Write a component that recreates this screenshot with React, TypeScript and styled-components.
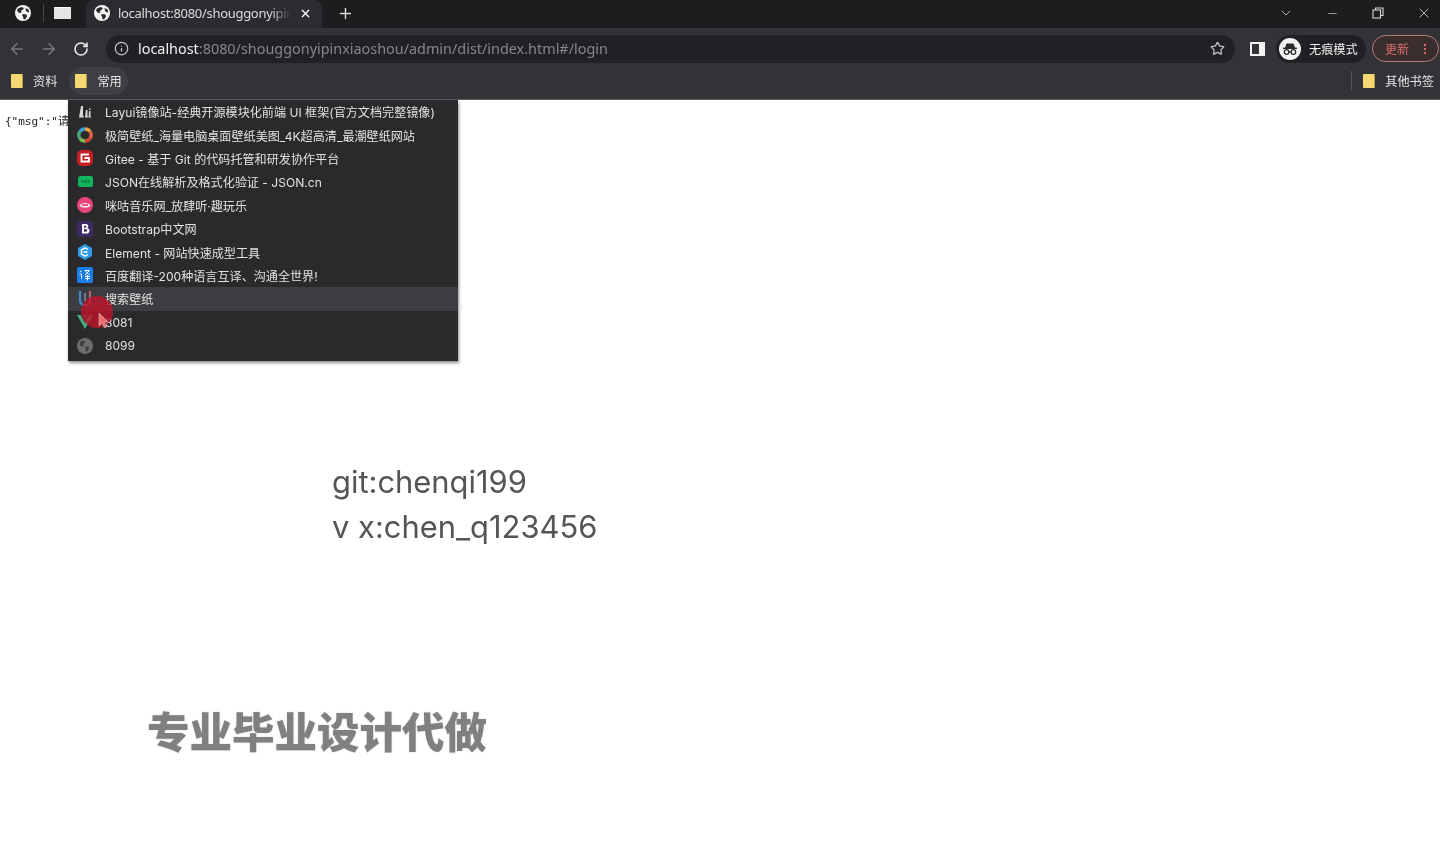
import React from 'react';
import styled, { createGlobalStyle } from 'styled-components';
import { ArrowLeft, ArrowRight, ChevronDown, Info, Minus, MoreVertical, Plus, RotateCw, Star, X } from 'lucide-react';

const GlobalStyle = createGlobalStyle`
  html, body {
    margin: 0;
    height: 100%;
    background: #fff;
    overflow: hidden;
  }
`;

const Page = styled.div`
  position: relative;
  width: 1440px;
  height: 864px;
  overflow: hidden;
  display: flex;
  flex-direction: column;
  font-family: "Noto Sans", "Noto Sans CJK SC", sans-serif;
  filter: blur(0.4px);
`;

const TabStrip = styled.div`
  height: 28px;
  box-sizing: border-box;
  padding: 0 0 2px 15px;
  background: #1b1d1f;
  display: flex;
  align-items: center;
  color: #fff;
`;

const PinnedGlobe = styled.div`
  width: 16px;
  height: 16px;
  display: flex;
`;

const StripDivider = styled.div`
  width: 1px;
  height: 18px;
  background: #45474a;
  margin: 0 10px 0 12px;
`;

const TabThumb = styled.div`
  width: 17px;
  height: 12px;
  background: #e6e6e6;
  border-top: 1px solid #fff;
  box-sizing: border-box;
`;

const ActiveTab = styled.div`
  width: 236px;
  height: 28px;
  margin: 0 0 -2px 15px;
  padding: 0 10px 2px 8px;
  box-sizing: border-box;
  background: #2a2c2f;
  border-radius: 8px 8px 0 0;
  display: flex;
  align-items: center;
  gap: 8px;
`;

const TabTitle = styled.span`
  flex: 1;
  font-size: 13px;
  letter-spacing: -0.3px;
  color: #dcdcdc;
  white-space: nowrap;
  overflow: hidden;
  -webkit-mask-image: linear-gradient(90deg, #000 88%, transparent);
  mask-image: linear-gradient(90deg, #000 88%, transparent);
`;

const NewTab = styled.div`
  margin-left: 15px;
  display: flex;
  color: #e0e0e0;
`;

const WindowControls = styled.div`
  margin: 0 -7px 0 auto;
  display: flex;
  align-items: center;
  color: #d8d8d8;
`;

const WindowButton = styled.div`
  width: 46px;
  display: flex;
  justify-content: center;
`;

const Toolbar = styled.div`
  height: 38px;
  box-sizing: border-box;
  padding: 3px 0 0 1px;
  background: #323336;
  display: flex;
  align-items: center;
`;

const NavButton = styled.div<{ $muted?: boolean }>`
  width: 32px;
  display: flex;
  justify-content: center;
  color: ${p => (p.$muted ? '#77797c' : '#e8e8e8')};
`;

const Omnibox = styled.div`
  width: 1129px;
  height: 28px;
  margin-left: 9px;
  padding: 0 10px 0 8px;
  box-sizing: border-box;
  background: #202124;
  border-radius: 14px;
  display: flex;
  align-items: center;
  color: #c6c6c6;
`;

const Url = styled.div`
  margin-left: 9px;
  font-size: 14.4px;
  color: #85878a;
  white-space: nowrap;
  flex: 1;
`;

const UrlHost = styled.span`
  color: #f0f0f0;
`;

const SideButton = styled.div`
  width: 15px;
  height: 14px;
  margin-left: 15px;
  box-sizing: border-box;
  border: 2px solid #f4f4f4;
  border-right-width: 6px;
  flex: none;
`;

const IncognitoChip = styled.div`
  width: 90px;
  height: 28px;
  margin-left: 11px;
  padding-left: 3px;
  box-sizing: border-box;
  display: flex;
  align-items: center;
  gap: 8px;
  background: #1f2023;
  border-radius: 14px;
  font-size: 12.2px;
  color: #f0f0f0;
  white-space: nowrap;
  flex: none;
`;

const IncognitoBadge = styled.div`
  width: 22px;
  height: 22px;
  border-radius: 50%;
  background: #f2f2f2;
  display: flex;
  align-items: center;
  justify-content: center;
`;

const UpdateChip = styled.div`
  width: 67px;
  height: 27px;
  margin-left: 6px;
  padding-left: 12px;
  box-sizing: border-box;
  display: flex;
  align-items: center;
  gap: 9px;
  border: 1px solid #b57c78;
  border-radius: 14px;
  background: #3a2d2e;
  color: #d5706a;
  font-size: 12px;
  flex: none;
`;

const UpdateDots = styled.div`
  display: flex;
`;

const BookmarkBar = styled.div`
  height: 34px;
  background: #323336;
  border-bottom: 1px solid #5a5b5d;
  box-sizing: border-box;
  display: flex;
  align-items: center;
  padding: 0 0 3px 5px;
  font-size: 12.2px;
  color: #e4e4e4;
`;

const BookmarkItem = styled.div<{ $open?: boolean }>`
  height: 28px;
  padding: 0 6px;
  margin-right: 6px;
  display: flex;
  align-items: center;
  gap: 10px;
  border-radius: 14px;
  background: ${p => (p.$open ? '#3e3f42' : 'transparent')};

  &:last-child {
    margin-right: 0;
  }
`;

const Folder = styled.div`
  width: 12px;
  height: 14px;
  background: #f7d774;
  border-right: 1px solid #b39a4c;
  box-sizing: border-box;
  border-radius: 1px;
`;

const BarDivider = styled.div`
  width: 1px;
  height: 20px;
  background: #55565a;
  margin-left: auto;
  margin-right: 5px;
`;

const Content = styled.main`
  flex: 1;
  background: #fff;
  overflow: hidden;
`;

const JsonLine = styled.pre`
  margin: 14px 0 0 5px;
  height: 16px;
  font: 11px/16px "DejaVu Sans Mono", "Noto Sans CJK SC", monospace;
  color: #222;
`;

const Contact = styled.div`
  margin: 329px 0 0 332px;
  font-family: Inter, "Liberation Sans", sans-serif;
  font-size: 30.9px;
  line-height: 45px;
  color: #555;
`;

const Slogan = styled.div`
  margin: 151px 0 0 147px;
  font-family: "Noto Sans CJK SC", sans-serif;
  font-weight: 900;
  font-size: 42.5px;
  line-height: 60px;
  color: #808080;
  text-shadow: 0 0 2px #d4d4d4;
`;

const Menu = styled.div`
  position: absolute;
  left: 68px;
  top: 100px;
  width: 390px;
  height: 261px;
  box-sizing: border-box;
  background: #2a2a2d;
  box-shadow: 1px 2px 3px rgba(0, 0, 0, 0.45);
`;

const MenuRow = styled.div<{ $hover?: boolean }>`
  height: 23.4px;
  padding-left: 8px;
  display: flex;
  align-items: center;
  gap: 11px;
  font-family: Inter, "Noto Sans CJK SC", sans-serif;
  font-size: 12.1px;
  white-space: nowrap;
  color: #e2e2e2;
  background: ${p => (p.$hover ? '#3c3d40' : 'transparent')};
`;

const MenuIcon = styled.div`
  width: 18px;
  height: 18px;
  flex: none;
  display: flex;
  align-items: center;
  justify-content: center;
`;

const CursorSpot = styled.div`
  position: absolute;
  left: 81px;
  top: 296px;
  width: 32px;
  height: 32px;
  border-radius: 50%;
  background: rgba(190, 20, 40, 0.8);
`;

const CursorArrow = styled.svg`
  position: absolute;
  left: 98px;
  top: 312px;
`;

const Globe = ({ size = 16 }: { size?: number }) => (
  <svg width={size} height={size} viewBox="0 0 16 16">
    <circle cx="8" cy="8" r="8" fill="#f4f4f4" />
    <path d="M3 3.5 6.5 2 9 3 7.5 5 6 5.5 6.5 7.5 4 8 2 5.5zM8 9l3.5.5.5 2L10 14.5 8.5 14 8 11.5 7 10zM10.5 3l3 1.5.8 3-2-.5L11 6z" fill="#26282b" />
  </svg>
);

const IncognitoIcon = () => (
  <svg width="18" height="18" viewBox="0 0 18 18" fill="none" stroke="#2a2a2a">
    <path d="M5.5 3.5h7L14 8H4z" fill="#2a2a2a" stroke="none" />
    <path d="M2 8.3h14" strokeWidth="1.4" />
    <circle cx="5.6" cy="12" r="2.3" strokeWidth="1.3" />
    <circle cx="12.4" cy="12" r="2.3" strokeWidth="1.3" />
    <path d="M7.9 12h2.2" strokeWidth="1.2" />
  </svg>
);

const RestoreIcon = () => (
  <svg width="12" height="12" viewBox="0 0 12 12" fill="none" stroke="#d8d8d8" strokeWidth="1.1">
    <rect x="1" y="3" width="7.5" height="8" />
    <path d="M3.5 3V1H11v7.5H8.5" />
  </svg>
);

const icons: Record<string, React.ReactNode> = {
  layui: (
    <svg width="14" height="14" viewBox="0 0 14 14" fill="#d8d8d8">
      <path d="M3 1h2v9l1 2.5H1zM8 5h1.5v6l1 1.5H7zM11 3.5h1.5V5H11zM11 6h1.5v5l.8 1.5H10.5z" />
    </svg>
  ),
  wallpaper: (
    <svg width="16" height="16" viewBox="0 0 16 16" fill="none" strokeWidth="3.4">
      <path d="M3 4.5A6 6 0 0 1 8 2" stroke="#37a0d8" />
      <path d="M8 2a6 6 0 0 1 5 2.5" stroke="#e8a13a" />
      <path d="M13 4.5a6 6 0 0 1 0 7" stroke="#e0603a" />
      <path d="M13 11.500A6 6 0 0 1 8 14" stroke="#d8403a" />
      <path d="M8 14a6 6 0 0 1-5-2.500" stroke="#7dbb50" />
      <path d="M3 11.500a6 6 0 0 1 0-7" stroke="#4aa878" />
    </svg>
  ),
  gitee: (
    <svg width="16" height="16" viewBox="0 0 16 16">
      <rect width="16" height="16" rx="5" fill="#c71d23" />
      <path d="M12 4.500H4.500v7H12V8H7.500" fill="none" stroke="#fff" strokeWidth="1.800" />
    </svg>
  ),
  json: (
    <svg width="15" height="11" viewBox="0 0 15 11">
      <rect width="15" height="11" rx="2.500" fill="#10b45c" />
      <path d="M3.500 5.500h8" stroke="#0a6a38" strokeWidth="2" strokeDasharray="2 1" />
    </svg>
  ),
  migu: (
    <svg width="16" height="16" viewBox="0 0 16 16">
      <circle cx="8" cy="8" r="8" fill="#e6457a" />
      <path d="M2.500 8.500C4 5 12 5 13.500 8.500 12 11.500 4 11.500 2.500 8.500z" fill="#fbe3ea" />
      <path d="M5 8h6" stroke="#d93368" strokeWidth="1.500" />
    </svg>
  ),
  bootstrap: (
    <svg width="16" height="16" viewBox="0 0 16 16">
      <rect width="16" height="16" rx="3" fill="#3b2a63" />
      <path d="M5 3h4a2.300 2.300 0 0 1 1.300 4.200A2.500 2.500 0 0 1 9.300 12.500H5zm2 1.800v1.900h1.700a1 1 0 0 0 0-1.900zm0 3.400v2.500h2a1.250 1.250 0 0 0 0-2.500z" fill="#fff" fillRule="evenodd" />
    </svg>
  ),
  element: (
    <svg width="16" height="16" viewBox="0 0 16 16">
      <path d="M8 0l7 4v8l-7 4-7-4V4z" fill="#2f9be8" />
      <path d="M11 5.500 8 3.800 4.500 6v4L8 12.200l3-1.700M6.500 8h4" fill="none" stroke="#fff" strokeWidth="1.400" />
    </svg>
  ),
  baidu: (
    <svg width="16" height="16" viewBox="0 0 16 16" stroke="#fff" strokeWidth="1" fill="none">
      <rect width="16" height="16" rx="2" fill="#1b7ee8" stroke="none" />
      <path d="M3 4l1.500 1M2.500 7h2v4.500M8 3.500h4.500L8 8M8 3.500l4.500 4.500M8 9.500h5M10.500 8v5.500M8 11.500h5" />
    </svg>
  ),
  search: (
    <svg width="16" height="18" viewBox="0 0 16 18" fill="none" strokeWidth="2.200">
      <path d="M3 1v9c0 3 2 5 5 5" stroke="#4a86c8" />
      <path d="M13 1v9c0 3-2 5-5 5" stroke="#c25b78" />
      <path d="M8 3v8" stroke="#8a8ab0" strokeWidth="1.500" />
    </svg>
  ),
  vue: (
    <svg width="16" height="14" viewBox="0 0 16 14">
      <path d="M0 0h16L8 14z" fill="#3fb27f" />
      <path d="M3.500 0h2.800L8 3l1.700-3h2.800L8 8z" fill="#35495e" />
    </svg>
  ),
  local: (
    <svg width="16" height="16" viewBox="0 0 16 16">
      <circle cx="8" cy="8" r="8" fill="#6b6c6e" />
      <path d="M3 4l4-1.500 1 2L6 6.500 7 8.500 3.500 8zM9 8.500l3 .5-.5 3L9 14l-.5-3z" fill="#3a3b3d" />
    </svg>
  ),
};

const bookmarks = [
  { icon: 'layui', label: 'Layui镜像站-经典开源模块化前端 UI 框架(官方文档完整镜像)' },
  { icon: 'wallpaper', label: '极简壁纸_海量电脑桌面壁纸美图_4K超高清_最潮壁纸网站' },
  { icon: 'gitee', label: 'Gitee - 基于 Git 的代码托管和研发协作平台' },
  { icon: 'json', label: 'JSON在线解析及格式化验证 - JSON.cn' },
  { icon: 'migu', label: '咪咕音乐网_放肆听·趣玩乐' },
  { icon: 'bootstrap', label: 'Bootstrap中文网' },
  { icon: 'element', label: 'Element - 网站快速成型工具' },
  { icon: 'baidu', label: '百度翻译-200种语言互译、沟通全世界!' },
  { icon: 'search', label: '搜索壁纸', hover: true },
  { icon: 'vue', label: '8081' },
  { icon: 'local', label: '8099' },
];

const App: React.FC = () => {
  return (
    <Page>
      <GlobalStyle />
      <TabStrip>
        <PinnedGlobe>
          <Globe />
        </PinnedGlobe>
        <StripDivider />
        <TabThumb />
        <ActiveTab>
          <Globe />
          <TabTitle>localhost:8080/shouggonyipinxiaoshou</TabTitle>
          <X size={13} strokeWidth={2.4} />
        </ActiveTab>
        <NewTab>
          <Plus size={17} />
        </NewTab>
        <WindowControls>
          <WindowButton>
            <ChevronDown size={16} strokeWidth={1.2} />
          </WindowButton>
          <WindowButton>
            <Minus size={13} strokeWidth={1.2} />
          </WindowButton>
          <WindowButton>
            <RestoreIcon />
          </WindowButton>
          <WindowButton>
            <X size={16} strokeWidth={1.2} />
          </WindowButton>
        </WindowControls>
      </TabStrip>
      <Toolbar>
        <NavButton $muted>
          <ArrowLeft size={18} />
        </NavButton>
        <NavButton $muted>
          <ArrowRight size={18} />
        </NavButton>
        <NavButton>
          <RotateCw size={16} strokeWidth={2.4} />
        </NavButton>
        <Omnibox>
          <Info size={15} />
          <Url>
            <UrlHost>localhost</UrlHost>:8080/shouggonyipinxiaoshou/admin/dist/index.html#/login
          </Url>
          <Star size={15} />
        </Omnibox>
        <SideButton />
        <IncognitoChip>
          <IncognitoBadge>
            <IncognitoIcon />
          </IncognitoBadge>
          无痕模式
        </IncognitoChip>
        <UpdateChip>
          更新
          <UpdateDots>
            <MoreVertical size={14} />
          </UpdateDots>
        </UpdateChip>
      </Toolbar>
      <BookmarkBar>
        <BookmarkItem>
          <Folder />
          资料
        </BookmarkItem>
        <BookmarkItem $open>
          <Folder />
          常用
        </BookmarkItem>
        <BarDivider />
        <BookmarkItem>
          <Folder />
          其他书签
        </BookmarkItem>
      </BookmarkBar>
      <Content>
        <JsonLine>{'{"msg":"请先登录","code":401}'}</JsonLine>
        <Contact>
          git:chenqi199
          <br />v x:chen_q123456
        </Contact>
        <Slogan>专业毕业设计代做</Slogan>
      </Content>
      <Menu>
        {bookmarks.map(b => (
          <MenuRow key={b.label} $hover={b.hover}>
            <MenuIcon>{icons[b.icon]}</MenuIcon>
            {b.label}
          </MenuRow>
        ))}
      </Menu>
      <CursorSpot />
      <CursorArrow width="12" height="18" viewBox="0 0 12 18">
        <path d="M1 1v13l3-3 2.500 5 2-1-2.500-5h4z" fill="#f06a6a" stroke="#c9c9c9" strokeWidth="0.6" />
      </CursorArrow>
    </Page>
  );
};

export default App;
